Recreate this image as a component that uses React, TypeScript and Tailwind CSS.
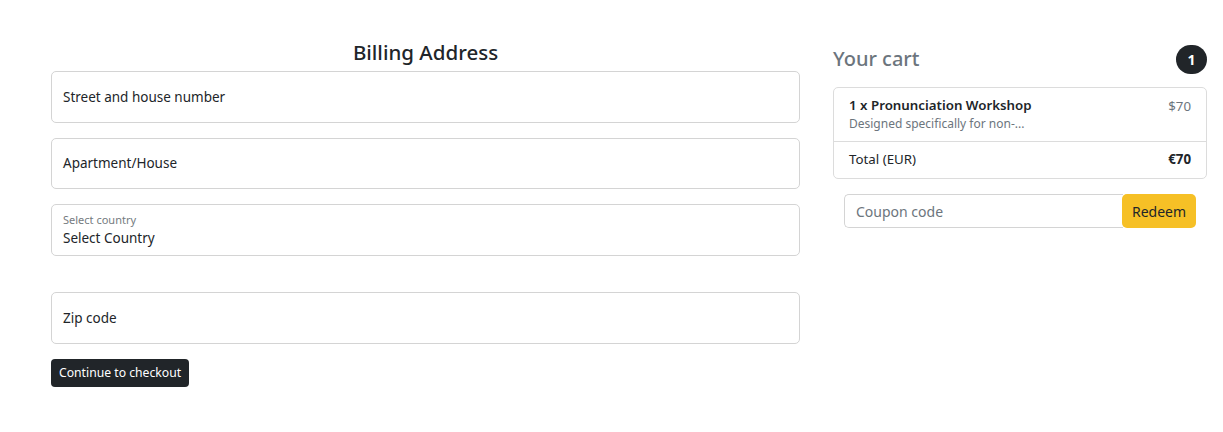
import React from "react";

export default function App() {
  const font = { fontFamily: '"Noto Sans", "Open Sans", sans-serif' };
  return (
    <div className="w-[1223px] h-[432px] bg-white text-[#212529]" style={font}>
      <div className="flex pl-[51px] pt-[38px] gap-[33px]">
        {/* Left column */}
        <div className="w-[749px] flex flex-col">
          <h2 className="h-[28px] text-center text-[20.5px] leading-[28px] font-medium text-[#212529]">
            Billing Address
          </h2>
          <div className="mt-[5px] h-[52px] border border-[#d4d4d4] rounded-[5px] flex items-center px-[11px] text-[13.5px]">
            Street and house number
          </div>
          <div className="mt-[15px] h-[51px] border border-[#d4d4d4] rounded-[5px] flex items-center px-[11px] text-[13.5px]">
            Apartment/House
          </div>
          <div className="mt-[15px] h-[52px] border border-[#d4d4d4] rounded-[5px] flex flex-col justify-center px-[11px]">
            <span className="text-[11px] leading-[14px] text-[#757b80]">Select country</span>
            <span className="text-[13.5px] leading-[20px] mt-[1px]">Select Country</span>
          </div>
          <div className="mt-[36px] h-[52px] border border-[#d4d4d4] rounded-[5px] flex items-center px-[11px] text-[13.5px]">
            Zip code
          </div>
          <div className="mt-[15px]">
            <button className="h-[28px] px-[8px] bg-[#212529] text-white text-[12.2px] rounded-[4px] leading-[28px]">
              Continue to checkout
            </button>
          </div>
        </div>
        {/* Right column */}
        <div className="w-[374px] flex flex-col">
          <div className="flex items-center justify-between h-[30px] mt-[6px]">
            <span className="text-[20px] text-[#6c757d] font-medium">Your cart</span>
            <span className="w-[31px] h-[29px] rounded-full bg-[#212529] text-white text-[14px] font-bold flex items-center justify-center">
              1
            </span>
          </div>
          <div className="mt-[13px] border border-[#dcdcdc] rounded-[5px]">
            <div className="h-[54px] px-[15px] flex justify-between border-b border-[#dcdcdc]">
              <div className="pt-[7px]">
                <div className="text-[13.3px] leading-[20px] font-semibold text-[#212529]">1 x Pronunciation Workshop</div>
                <div className="text-[12px] leading-[18px] text-[#6c757d]">Designed specifically for non-...</div>
              </div>
              <div className="pt-[8px] text-[13.3px] leading-[20px] text-[#6c757d]">$70</div>
            </div>
            <div className="h-[36px] px-[15px] flex items-center justify-between text-[13.3px]">
              <span>Total (EUR)</span>
              <span className="font-bold">€70</span>
            </div>
          </div>
          <div className="mt-[15px] mx-[11px] flex h-[34px]">
            <div className="flex-1 border border-[#d4d4d4] border-r-0 rounded-l-[5px] flex items-center px-[11px] text-[14px] text-[#6c757d]">
              Coupon code
            </div>
            <button className="w-[74px] bg-[#f6c026] rounded-[5px] text-[14px] text-[#212529] -ml-[1px]">
              Redeem
            </button>
          </div>
        </div>
      </div>
    </div>
  );
}
